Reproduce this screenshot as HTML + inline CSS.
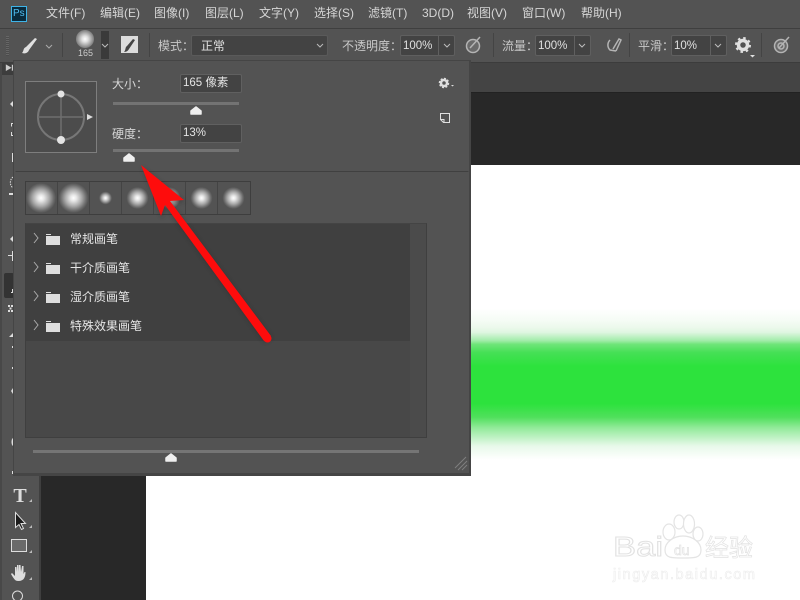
<!DOCTYPE html>
<html><head><meta charset="utf-8">
<style>
html,body{margin:0;padding:0;width:800px;height:600px;overflow:hidden;background:#282828}
body{position:relative;font-family:"Liberation Sans","Noto Sans CJK SC",sans-serif;color:#dcdcdc}
.a{position:absolute}
.t{position:absolute;white-space:nowrap;line-height:16px;font-size:12px}
.menu{top:5px;color:#d6d6d6}
.box{position:absolute;background:#434343;border:1px solid #5f5f5f;border-radius:2px;box-sizing:border-box}
.row{position:absolute;left:26px;width:384px;height:29px;background:#404040;border-bottom:1px solid #444}
.row .t{left:44px;top:7px;color:#e6e6e6}
.row svg{position:absolute;left:0;top:0}
</style></head><body>
<!-- canvas -->
<div class="a" style="left:146px;top:165px;width:654px;height:435px;background:#fff"></div>
<div class="a" style="left:146px;top:300px;width:654px;height:170px;background:linear-gradient(180deg,#fff 0%,#fff 5%,#f5fcf5 12%,#ecf9ec 16%,#dff6e1 19%,#a0eca8 24%,#70e57a 26%,#45e055 31%,#2de23d 39%,#2de23d 61%,#50e05c 69%,#90ea98 75%,#c0f2c5 81%,#e8f9ea 86%,#fff 94%)"></div>
<div class="a" style="left:40px;top:92px;width:760px;height:1px;background:#222"></div>
<!-- tab bar -->
<div class="a" style="left:40px;top:62px;width:760px;height:30px;background:#444"></div>
<!-- menu -->
<div class="a" style="left:0;top:0;width:800px;height:28px;background:#535353"></div>
<div class="a" style="left:0;top:28px;width:800px;height:1px;background:#3f3f3f"></div>
<div class="a" style="left:11px;top:6px;width:14px;height:14px;background:#0a2a3c;border:1px solid #3fb4e8"></div>
<div class="t" style="left:13px;top:6px;font-size:10px;color:#52bdf0;line-height:15px">Ps</div>
<div class="t menu" style="left:46px">文件(F)</div>
<div class="t menu" style="left:100px">编辑(E)</div>
<div class="t menu" style="left:154px">图像(I)</div>
<div class="t menu" style="left:205px">图层(L)</div>
<div class="t menu" style="left:259px">文字(Y)</div>
<div class="t menu" style="left:314px">选择(S)</div>
<div class="t menu" style="left:368px">滤镜(T)</div>
<div class="t menu" style="left:422px">3D(D)</div>
<div class="t menu" style="left:467px">视图(V)</div>
<div class="t menu" style="left:522px">窗口(W)</div>
<div class="t menu" style="left:581px">帮助(H)</div>
<!-- options bar -->
<div class="a" style="left:0;top:29px;width:800px;height:33px;background:#535353"></div>
<div class="a" style="left:0;top:62px;width:800px;height:1px;background:#3c3c3c"></div>
<div class="a" style="left:6px;top:36px;width:3px;height:20px;background:repeating-linear-gradient(180deg,#666 0 1px,#4c4c4c 1px 2px)"></div>
<svg class="a" style="left:0;top:29px" width="800" height="33">
 <path d="M22 24c3 1 6 0 7-3l8-11-2-1-9 9c-3 1-2 4-4 6z" fill="#e0e0e0"/>
 <path d="M46 16l3 3 3-3" fill="none" stroke="#aaa"/>
 <path d="M62.500 4v24M149.500 4v24M493.500 4v24M629.500 4v24M761.500 4v24" stroke="#444"/>
 <rect x="101" y="2" width="8" height="28" fill="#3a3a3a"/>
 <path d="M102 15l3 3 3-3" fill="none" stroke="#bbb"/>
 <rect x="121" y="7" width="17" height="17" fill="#dcdcdc"/>
 <path d="M124 23c2 0 4-1 5-3l6-9-2-1-6 7c-2 1-1 4-3 6z" fill="#444"/>
 <g fill="#6a6a6a" stroke="#b4b4b4" stroke-width="1.500">
  <circle cx="473" cy="17" r="6.500"/><path d="M470 19l10-11"/>
  <path d="M610 11a7 7 0 0 0 0 10l6 1M613 20l6-10 2 1-5 11" fill="none"/>
  <circle cx="781" cy="17" r="6.500"/><circle cx="781" cy="17" r="3"/><path d="M779 19l10-11"/>
 </g>
 <circle cx="743" cy="16" r="4.500" fill="none" stroke="#e0e0e0" stroke-width="3.500"/>
 <circle cx="743" cy="16" r="7" fill="none" stroke="#e0e0e0" stroke-width="2" stroke-dasharray="2.500 3"/>
 <path d="M750 26h5l-2.500 2.500z" fill="#e0e0e0"/>
</svg>
<div class="a" style="left:76px;top:30px;width:18px;height:18px;border-radius:50%;background:radial-gradient(circle,#fff 0%,#ddd 25%,#888 65%,#535353 100%)"></div>
<div class="t" style="left:78px;top:47px;font-size:9px;line-height:12px;color:#ccc">165</div>
<div class="t" style="left:158px;top:38px;color:#c8c8c8">模式：</div>
<div class="box" style="left:191px;top:35px;width:137px;height:21px;border-color:#5a5a5a"></div>
<svg class="a" style="left:316px;top:42px" width="10" height="8"><path d="M1 2l3 3 3-3" fill="none" stroke="#bbb"/></svg>
<div class="t" style="left:201px;top:38px;color:#e0e0e0">正常</div>
<div class="t" style="left:342px;top:38px;color:#c8c8c8">不透明度：</div>
<div class="box" style="left:400px;top:35px;width:55px;height:21px"></div>
<div class="a" style="left:438px;top:36px;width:1px;height:19px;background:#606060"></div>
<div class="t" style="left:403px;top:38px;color:#e0e0e0;font-size:11.500px">100%</div>
<div class="t" style="left:502px;top:38px;color:#c8c8c8">流量：</div>
<div class="box" style="left:535px;top:35px;width:56px;height:21px"></div>
<div class="a" style="left:574px;top:36px;width:1px;height:19px;background:#606060"></div>
<div class="t" style="left:538px;top:38px;color:#e0e0e0;font-size:11.500px">100%</div>
<div class="t" style="left:638px;top:38px;color:#c8c8c8">平滑：</div>
<div class="box" style="left:671px;top:35px;width:56px;height:21px"></div>
<div class="a" style="left:710px;top:36px;width:1px;height:19px;background:#606060"></div>
<div class="t" style="left:674px;top:38px;color:#e0e0e0;font-size:11.500px">10%</div>
<svg class="a" style="left:400px;top:29px" width="340" height="33"><g fill="none" stroke="#bbb">
 <path d="M44 15l3 3 3-3M179 15l3 3 3-3M315 15l3 3 3-3"/></g></svg>
<!-- toolbar -->
<div class="a" style="left:0;top:63px;width:39px;height:537px;background:#535353"></div>
<div class="a" style="left:0;top:63px;width:2px;height:537px;background:#484848"></div>
<div class="a" style="left:39px;top:475px;width:2px;height:125px;background:#3f3f3f"></div>
<div class="a" style="left:4px;top:273px;width:10px;height:25px;background:#333;border-radius:2px"></div>
<div class="a" style="left:2px;top:62px;width:12px;height:13px;background:#3d3d3d"></div>
<div class="t" style="left:5px;top:62px;font-size:7px;line-height:13px;color:#ccc;letter-spacing:-1px">▶▶</div>
<svg class="a" style="left:0;top:0" width="40" height="600">
 <g fill="#ddd">
  <path d="M10 104l3-3v6z"/>
  <rect x="9" y="193" width="4" height="2"/>
  <rect x="12" y="153" width="1.500" height="9"/>
  <path d="M13 236l-3 3 3 3z"/>
  <rect x="12" y="251" width="1" height="10"/>
  <rect x="8" y="255" width="5" height="1"/>
  <path d="M11 293h2v-4h-1v3h-1z"/>
  <path d="M8 305h2v2h-2zM11 305h2v2h-2zM9.500 307.500h2v2h-2zM8 310h2v2h-2zM11 310h2v2h-2z"/>
  <path d="M13 333l-4 4h4z"/>
  <rect x="12" y="346" width="1" height="2"/><rect x="12" y="367" width="1" height="2"/>
  <path d="M13 388l-2 3 2 3z"/>
  <path d="M13 438c-2 1-2 7 0 8z"/>
  <rect x="12" y="471" width="1" height="3"/>
 </g>
 <path d="M13 123.500h-1.500v3M11.500 132v3.500h1.500" stroke="#ddd" fill="none"/>
 <path d="M13 177a7 7 0 0 0 0 11" stroke="#ddd" stroke-dasharray="1.500 1" fill="none"/>
 <text x="20" y="502" font-family="Liberation Serif,serif" font-size="20" font-weight="bold" fill="#ddd" text-anchor="middle">T</text>
 <path d="M15.500 512.500v15l3.500-3 2.500 5 2-1-2.500-5h4.500z" fill="#1c1c1c" stroke="#ddd"/>
 <rect x="11.500" y="539.500" width="15" height="12" fill="#6a6a6a" stroke="#ddd"/>
 <path d="M18 581c-3 0-4-2-7-7l1-1 3 3v-9h1.500l.5 5v-7h1.500v7l.5-7h1.500l.5 7 1-6h1.500v8l1-2h1c0 5-1.500 9-7 9z" fill="#ddd"/>
 <circle cx="17.500" cy="596" r="5" fill="none" stroke="#ddd"/>
 <path d="M29 502h3v-3zM29 528h3v-3zM29 553h3v-3zM29 580h3v-3z" fill="#bbb"/>
</svg>
<!-- panel -->
<div class="a" style="left:13px;top:60px;width:458px;height:416px;background:#535353;border:1px solid #454545;border-width:1px 2px 3px 1px;box-sizing:border-box"></div>
<svg class="a" style="left:25px;top:81px" width="72" height="72">
 <rect x=".5" y=".5" width="71" height="71" fill="#4c4c4c" stroke="#7e7e7e"/>
 <circle cx="36" cy="36" r="23" fill="none" stroke="#777" stroke-width="2"/>
 <path d="M36 13v46M13 36h46" stroke="#6e6e6e" stroke-width="1.500"/>
 <circle cx="36" cy="13" r="3.500" fill="#e4e4e4"/><circle cx="36" cy="59" r="4" fill="#e4e4e4"/>
 <path d="M62 33l6 3-6 3z" fill="#ddd"/>
</svg>
<div class="t" style="left:112px;top:76px;color:#d6d6d6">大小：</div>
<div class="box" style="left:180px;top:74px;width:62px;height:19px;border-color:#606060"></div>
<div class="t" style="left:183px;top:75px;color:#e4e4e4;font-size:11.500px">165 像素</div>
<div class="a" style="left:113px;top:102px;width:126px;height:3px;background:#737373"></div>
<div class="t" style="left:112px;top:126px;color:#d6d6d6">硬度：</div>
<div class="box" style="left:180px;top:124px;width:62px;height:19px;border-color:#606060"></div>
<div class="t" style="left:183px;top:125px;color:#e4e4e4;font-size:11.500px">13%</div>
<div class="a" style="left:113px;top:149px;width:126px;height:3px;background:#737373"></div>
<svg class="a" style="left:0;top:0" width="480" height="480">
 <path d="M196 107l5 4v3h-10v-3zM129 154l5 4v3h-10v-3z" fill="#efefef" stroke="#efefef" stroke-width="1.500" stroke-linejoin="round"/>
 <path d="M15.500 171.500h453" stroke="#404040"/>
 <path d="M440.500 113.500h9v9h-6l-3-3zM441 119.500h3v3" fill="none" stroke="#e0e0e0"/>
 <circle cx="444" cy="83" r="3" fill="none" stroke="#ddd" stroke-width="2.500"/>
 <circle cx="444" cy="83" r="4.500" fill="none" stroke="#ddd" stroke-width="1.500" stroke-dasharray="2 1.500"/>
 <path d="M451 85h3l-1.500 1.500z" fill="#ddd"/>
 <g stroke="#7f7f7f"><path d="M455 468l11-11M458 470l9-9M462 470l5-5"/></g>
</svg>
<!-- presets -->
<div class="a" style="left:25px;top:181px;width:226px;height:34px;background:#535353;border:1px solid #3e3e3e;box-sizing:border-box"></div>
<svg class="a" style="left:25px;top:181px" width="226" height="34">
 <defs><radialGradient id="g"><stop offset="0" stop-color="#fff"/><stop offset=".2" stop-color="#e8e8e8"/><stop offset=".55" stop-color="#aaa"/><stop offset=".85" stop-color="#6c6c6c"/><stop offset="1" stop-color="#535353"/></radialGradient></defs>
 <path d="M32.500 1v32M64.500 1v32M96.500 1v32M128.500 1v32M160.500 1v32M192.500 1v32" stroke="#444"/>
 <circle cx="16" cy="17" r="15" fill="url(#g)"/>
 <circle cx="48.500" cy="17" r="15" fill="url(#g)"/>
 <circle cx="80.500" cy="17" r="6.500" fill="url(#g)"/>
 <circle cx="112.500" cy="17" r="11" fill="url(#g)"/>
 <circle cx="144.500" cy="17" r="11" fill="url(#g)"/>
 <circle cx="176.500" cy="17" r="11" fill="url(#g)"/>
 <circle cx="208.500" cy="17" r="11" fill="url(#g)"/>
</svg>
<!-- list -->
<div class="a" style="left:25px;top:223px;width:402px;height:215px;background:#484848;border:1px solid #3f3f3f;border-top-color:#444;box-sizing:border-box"></div>
<div class="a" style="left:410px;top:224px;width:16px;height:213px;background:#4b4b4b"></div>
<div class="row" style="top:224px"><svg width="40" height="29"><path d="M8 9l4 5-4 5" fill="none" stroke="#aaa"/><path d="M20 10h5v1h-5zM20 12h14v9h-14z" fill="#dedede"/></svg><div class="t">常规画笔</div></div>
<div class="row" style="top:253px"><svg width="40" height="29"><path d="M8 9l4 5-4 5" fill="none" stroke="#aaa"/><path d="M20 10h5v1h-5zM20 12h14v9h-14z" fill="#dedede"/></svg><div class="t">干介质画笔</div></div>
<div class="row" style="top:282px"><svg width="40" height="29"><path d="M8 9l4 5-4 5" fill="none" stroke="#aaa"/><path d="M20 10h5v1h-5zM20 12h14v9h-14z" fill="#dedede"/></svg><div class="t">湿介质画笔</div></div>
<div class="row" style="top:311px;border-bottom:0;height:30px"><svg width="40" height="29"><path d="M8 9l4 5-4 5" fill="none" stroke="#aaa"/><path d="M20 10h5v1h-5zM20 12h14v9h-14z" fill="#dedede"/></svg><div class="t">特殊效果画笔</div></div>
<div class="a" style="left:33px;top:450px;width:386px;height:3px;background:#757575"></div>
<svg class="a" style="left:0;top:0" width="480" height="480"><path d="M171 454l5 4v3h-10v-3z" fill="#efefef" stroke="#efefef" stroke-width="1.500" stroke-linejoin="round"/></svg>
<!-- arrow -->
<svg class="a" style="left:0;top:0" width="800" height="600">
 <defs><filter id="b" x="-20%" y="-20%" width="140%" height="140%"><feGaussianBlur stdDeviation="2"/></filter></defs>
 <path d="M141 165L184 200L170 201L271 336L264 341L165 205L161 216Z" fill="#222" opacity=".35" filter="url(#b)" transform="translate(1,2)"/>
 <path d="M141 165L184 200L170 201L271 336L264 341L165 205L161 216Z" fill="#fe0c0c"/>
 <circle cx="267.500" cy="338.500" r="4" fill="#fe0c0c"/>
</svg>
<!-- watermark -->
<svg class="a" style="left:580px;top:500px" width="220" height="100" font-family="Liberation Sans,'Noto Sans CJK SC',sans-serif">
 <g fill="#fff" stroke="#e4e4e4" stroke-width="1.200">
  <ellipse cx="89" cy="32" rx="6" ry="8"/><ellipse cx="99" cy="22" rx="5" ry="7"/><ellipse cx="109" cy="24" rx="5.500" ry="9"/><ellipse cx="118" cy="34" rx="5" ry="7"/>
  <path d="M103 36c-9 0-18 6-18 14s6 8 18 8 18 0 18-8-9-14-18-14z"/>
 </g>
 <text x="33" y="56" font-size="28" fill="#fff" stroke="#e2e2e2" textLength="50" lengthAdjust="spacingAndGlyphs">Bai</text>
 <text x="94" y="55" font-size="14" fill="#fff" stroke="#e2e2e2" stroke-width=".7">du</text>
 <text x="125" y="56" font-size="24" fill="#fff" stroke="#e2e2e2" stroke-width=".7">经验</text>
 <text x="33" y="79" font-size="14.500" fill="#fff" stroke="#ececec" stroke-width=".6" textLength="142">jingyan.baidu.com</text>
</svg>
</body></html>
